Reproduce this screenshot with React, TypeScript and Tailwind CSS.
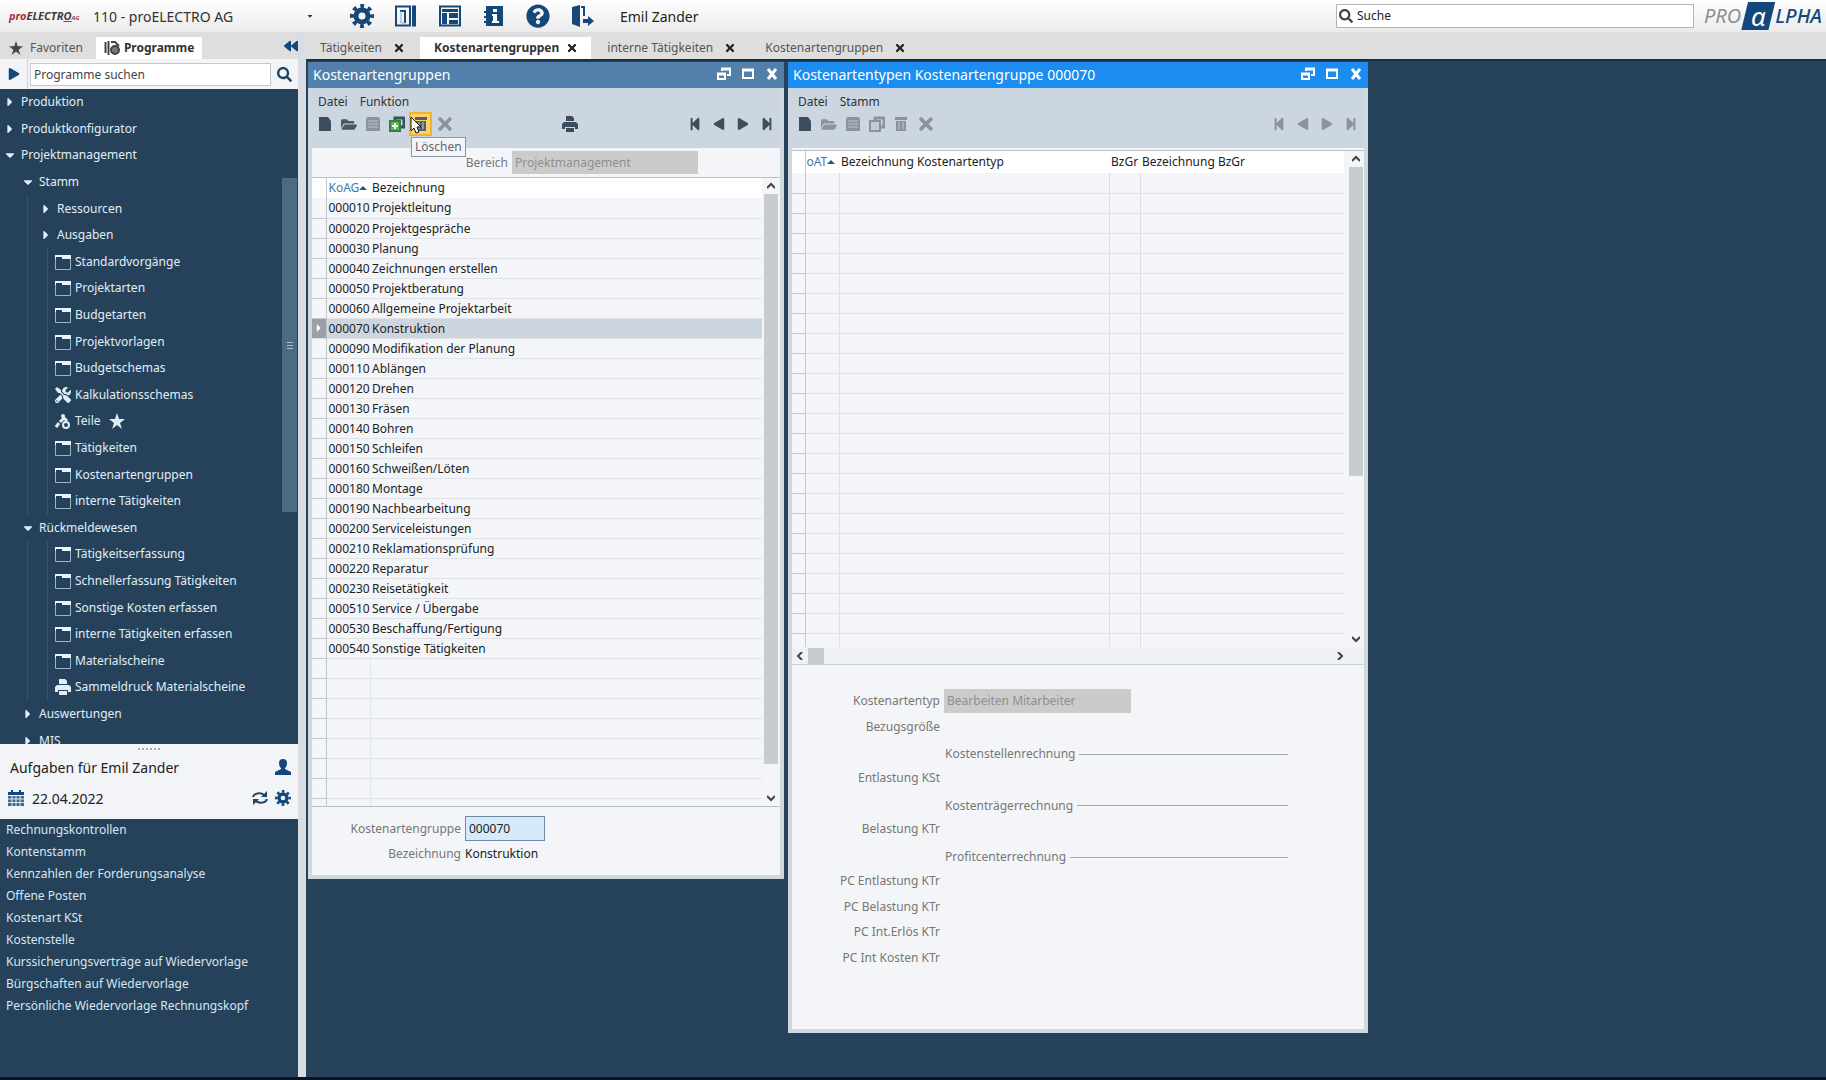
import React from "react";
import {
  FaBackward,
  FaCaretDown,
  FaCaretRight,
  FaFolderOpen,
  FaPlay,
  FaQuestionCircle,
  FaSearch,
  FaStepBackward,
  FaStepForward,
  FaTimes,
  FaTools,
} from "react-icons/fa";

interface TreeEntry {
  label: string;
  level: number;
  kind: "open" | "closed" | "form" | "tools" | "part" | "print";
  starred?: boolean;
}

const tree: TreeEntry[] = [
  { label: "Produktion", level: 0, kind: "closed" },
  { label: "Produktkonfigurator", level: 0, kind: "closed" },
  { label: "Projektmanagement", level: 0, kind: "open" },
  { label: "Stamm", level: 1, kind: "open" },
  { label: "Ressourcen", level: 2, kind: "closed" },
  { label: "Ausgaben", level: 2, kind: "closed" },
  { label: "Standardvorgänge", level: 2, kind: "form" },
  { label: "Projektarten", level: 2, kind: "form" },
  { label: "Budgetarten", level: 2, kind: "form" },
  { label: "Projektvorlagen", level: 2, kind: "form" },
  { label: "Budgetschemas", level: 2, kind: "form" },
  { label: "Kalkulationsschemas", level: 2, kind: "tools" },
  { label: "Teile", level: 2, kind: "part", starred: true },
  { label: "Tätigkeiten", level: 2, kind: "form" },
  { label: "Kostenartengruppen", level: 2, kind: "form" },
  { label: "interne Tätigkeiten", level: 2, kind: "form" },
  { label: "Rückmeldewesen", level: 1, kind: "open" },
  { label: "Tätigkeitserfassung", level: 2, kind: "form" },
  { label: "Schnellerfassung Tätigkeiten", level: 2, kind: "form" },
  { label: "Sonstige Kosten erfassen", level: 2, kind: "form" },
  { label: "interne Tätigkeiten erfassen", level: 2, kind: "form" },
  { label: "Materialscheine", level: 2, kind: "form" },
  { label: "Sammeldruck Materialscheine", level: 2, kind: "print" },
  { label: "Auswertungen", level: 1, kind: "closed" },
  { label: "MIS", level: 1, kind: "closed" },
];

const tasks = [
  "Rechnungskontrollen",
  "Kontenstamm",
  "Kennzahlen der Forderungsanalyse",
  "Offene Posten",
  "Kostenart KSt",
  "Kostenstelle",
  "Kurssicherungsverträge auf Wiedervorlage",
  "Bürgschaften auf Wiedervorlage",
  "Persönliche Wiedervorlage Rechnungskopf",
];

const groups = [
  { id: "000010", name: "Projektleitung" },
  { id: "000020", name: "Projektgespräche" },
  { id: "000030", name: "Planung" },
  { id: "000040", name: "Zeichnungen erstellen" },
  { id: "000050", name: "Projektberatung" },
  { id: "000060", name: "Allgemeine Projektarbeit" },
  { id: "000070", name: "Konstruktion" },
  { id: "000090", name: "Modifikation der Planung" },
  { id: "000110", name: "Ablängen" },
  { id: "000120", name: "Drehen" },
  { id: "000130", name: "Fräsen" },
  { id: "000140", name: "Bohren" },
  { id: "000150", name: "Schleifen" },
  { id: "000160", name: "Schweißen/Löten" },
  { id: "000180", name: "Montage" },
  { id: "000190", name: "Nachbearbeitung" },
  { id: "000200", name: "Serviceleistungen" },
  { id: "000210", name: "Reklamationsprüfung" },
  { id: "000220", name: "Reparatur" },
  { id: "000230", name: "Reisetätigkeit" },
  { id: "000510", name: "Service / Übergabe" },
  { id: "000530", name: "Beschaffung/Fertigung" },
  { id: "000540", name: "Sonstige Tätigkeiten" },
];

const selectedGroup = "000070";

const costFields = [
  { label: "Bezugsgröße" },
  { section: "Kostenstellenrechnung" },
  { label: "Entlastung KSt" },
  { section: "Kostenträgerrechnung" },
  { label: "Belastung KTr" },
  { section: "Profitcenterrechnung" },
  { label: "PC Entlastung KTr" },
  { label: "PC Belastung KTr" },
  { label: "PC Int.Erlös KTr" },
  { label: "PC Int Kosten KTr" },
];

/* ---------- Icons ---------- */

const GearIcon = ({ className }: { className: string }) => (
  <svg viewBox="0 0 24 24" className={className} fill="none" stroke="#15487a">
    <circle cx="12" cy="12" r="6" strokeWidth="5" />
    <circle cx="12" cy="12" r="10" strokeWidth="4" strokeDasharray="3.850 4" strokeDashoffset="2" />
  </svg>
);

const StarIcon = ({ className }: { className: string }) => (
  <svg viewBox="0 0 16 16" className={className} fill="currentColor">
    <path d="M8 0l2 6h6l-5 4 2 6-5-4-5 4 2-6-5-4h6z" />
  </svg>
);

const FormIcon = () => (
  <svg viewBox="0 0 16 16" className="h-4 w-4" fill="none">
    <path d="M.5 2.5h15v13H.5z" stroke="#9db4c6" />
    <path d="M0 1h16v4H0z" fill="#e8f3fb" />
    <path d="M1 4h6" stroke="#25425a" strokeWidth="2" />
  </svg>
);

const PrinterIcon = ({ className }: { className?: string }) => (
  <svg viewBox="0 0 16 16" className={`h-4 w-4 ${className ?? ""}`} fill="currentColor">
    <path d="M4 0h6l2 2v3H4z" />
    <path d="M2 6h12l2 2v5h-3v-2H3v2H0V8z" />
    <path d="M4 12h8v4H4z" />
  </svg>
);

const PartIcon = () => (
  <svg viewBox="0 0 16 16" className="h-4 w-4" fill="none" stroke="#e2eef7">
    <path d="M1 14l3-4M5 9l4-4 3 3" strokeWidth="3" />
    <circle cx="8" cy="3" r="2" fill="#e2eef7" stroke="none" />
    <circle cx="11" cy="12" r="3" strokeWidth="2" />
  </svg>
);

const UserIcon = () => (
  <svg viewBox="0 0 16 16" className="h-4 w-4" fill="#15487a">
    <path d="M8 0c3 0 4 2 4 4 0 3-1 4-2 5v1l6 3v3H0v-3l6-3V9C5 8 4 7 4 4c0-2 1-4 4-4z" />
  </svg>
);

const PanelIcon = () => (
  <svg viewBox="0 0 24 24" className="h-6 w-6" fill="none">
    <path d="M2 2.5h14v19H2z" stroke="#15487a" strokeWidth="2" />
    <path d="M18 1.5h4v21h-4z" fill="#15487a" />
    <path d="M6 7h5v12" stroke="#15487a" strokeWidth="2" />
    <path d="M7 7v12h4" stroke="#8fa9c2" />
  </svg>
);

const LayoutIcon = () => (
  <svg viewBox="0 0 24 24" className="h-6 w-6" fill="none">
    <path d="M2 2.5h20v19H2z" stroke="#15487a" strokeWidth="2" />
    <path d="M4 5h16v3H4zM4 9h5v11H4zM11 9h9v5h-9zM11 16h9v4h-9z" fill="#15487a" />
  </svg>
);

const InfoIcon = () => (
  <svg viewBox="0 0 24 24" className="h-6 w-6">
    <path d="M4 2h17v20H4v-3H2v-2h2v-3H2v-2h2V9H2V7h2z" fill="#15487a" />
    <path d="M11 5h4v3h-4zM10 10h5v7h2v2h-7v-2h1v-5h-1z" fill="#fff" />
  </svg>
);

const ExitIcon = () => (
  <svg viewBox="0 0 24 24" className="h-6 w-6" fill="#15487a">
    <path d="M2 3l8-2v22l-8-3zM11 2h4v10h-2V4h-2z" />
    <path d="M13 15h5v-3l6 5-6 5v-3h-5z" />
  </svg>
);

const TabProgramIcon = () => (
  <svg viewBox="0 0 16 16" className="h-4 w-4" fill="none" stroke="#444">
    <path d="M1.500 2v11M4.500 1v14" strokeWidth="2" />
    <path d="M7 2h4l4 4" strokeWidth="2" />
    <circle cx="11" cy="10" r="4" fill="#777" strokeWidth="2" />
  </svg>
);

const NewIcon = () => (
  <svg viewBox="0 0 16 16" className="h-4 w-4" fill="#3c4d5e">
    <path d="M2 1h9l3 4v10H2z" />
  </svg>
);

const SaveIcon = () => (
  <svg viewBox="0 0 16 16" className="h-4 w-4">
    <path d="M2 1h12l1 2v12H1V3z" fill="#8b949d" />
    <path d="M3 5h10M3 8h10M3 11h10" stroke="#b9c3cc" />
  </svg>
);

const TrashIcon = () => (
  <svg viewBox="0 0 16 16" className="h-4 w-4" fill="currentColor">
    <path d="M2 1h12v3H2zM3 5h10v10H3z" />
    <path d="M6 6v7M10 6v7" stroke="#c3ccd4" />
  </svg>
);

const CopyIcon = ({ green }: { green?: boolean }) => (
  <svg viewBox="0 0 16 16" className="h-4 w-4" fill="none">
    <path d="M6 4V2h9v9h-3" stroke={green ? "#35505f" : "#8b949d"} strokeWidth="3" />
    <path
      d="M1 5h10v10H1z"
      fill={green ? "#5cb653" : "#c3ccd4"}
      stroke={green ? "#3d7a4b" : "#8b949d"}
      strokeWidth="2"
    />
    {green && <path d="M6 7v6M3 10h6" stroke="#e5ffe0" strokeWidth="2" />}
  </svg>
);

const CalendarIcon = () => (
  <svg viewBox="0 0 16 16" className="h-4 w-4">
    <path d="M0 2h3V0h2v2h6V0h2v2h3v3H0z" fill="#15487a" />
    <path d="M0 6h16v10H0z" fill="#3b6a94" />
    <path d="M0 9h16M0 12.500h16M4 6v10M8 6v10M12 6v10" stroke="#dbe7f1" />
  </svg>
);

const RefreshIcon = () => (
  <svg viewBox="0 0 16 16" className="h-4 w-4" fill="none" stroke="#1c4468" strokeWidth="2">
    <path d="M1 7c1-4 8-5 11-2M15 9c-1 4-8 5-11 2" />
    <path d="M15 1v6H9zM1 15V9h6z" fill="#1c4468" stroke="none" />
  </svg>
);

const RestoreIcon = () => (
  <svg viewBox="0 0 16 16" className="h-4 w-4" fill="none" stroke="#fff" strokeWidth="2">
    <path d="M2 8h7v5H2zM6 5V3h8v6h-3" />
    <path d="M1 8h9M5 3h10" strokeWidth="3" />
  </svg>
);

const MaximizeIcon = () => (
  <svg viewBox="0 0 16 16" className="h-4 w-4" fill="none" stroke="#fff" strokeWidth="2">
    <path d="M3 4h10v8H3z" />
    <path d="M2 4h12" strokeWidth="3" />
  </svg>
);

const CloseIcon = () => (
  <svg viewBox="0 0 16 16" className="h-4 w-4" fill="none" stroke="#fff" strokeWidth="3">
    <path d="M4 3l8 10M12 3L4 13" />
  </svg>
);

const Chevron = ({ d }: { d: string }) => (
  <svg viewBox="0 0 8 8" className="h-2 w-2" fill="none" stroke="#444" strokeWidth="2">
    <path d={d} />
  </svg>
);

const SortIcon = () => (
  <svg viewBox="0 0 8 8" className="h-2 w-2" fill="#24577f">
    <path d="M0 6l4-4 4 4z" />
  </svg>
);

/* ---------- Header ---------- */

const Header = () => (
  <header className="flex h-8 shrink-0 items-center bg-linear-to-b from-white to-[#ebebeb] text-[#333]">
    <span className="ml-[9px] w-[84px] shrink-0 text-[11px] font-bold italic text-[#3c3c3c]">
      <span className="text-[#b02a37]">pro</span>ELECTR
      <span className="underline decoration-[#b02a37]">O</span>
      <span className="text-[6px] text-[#b02a37]">AG</span>
    </span>
    <select
      aria-label="Mandant"
      className="w-[205px] appearance-none bg-transparent text-[14px] outline-none"
    >
      <option>110 - proELECTRO AG</option>
    </select>
    <FaCaretDown className="ml-2 h-2 w-2" />
    <nav className="ml-9 flex items-center gap-5 text-[#15487a]">
      <button aria-label="Einstellungen">
        <GearIcon className="h-6 w-6" />
      </button>
      <button aria-label="Seitenleiste">
        <PanelIcon />
      </button>
      <button aria-label="Layout">
        <LayoutIcon />
      </button>
      <button aria-label="Info">
        <InfoIcon />
      </button>
      <button aria-label="Hilfe">
        <FaQuestionCircle className="h-6 w-6" />
      </button>
      <button aria-label="Abmelden">
        <ExitIcon />
      </button>
    </nav>
    <span className="ml-[26px] text-[14px] text-[#222]">Emil Zander</span>
    <label className="ml-auto flex h-6 w-[358px] items-center gap-1 border border-[#b5b5b5] bg-white px-[2px]">
      <FaSearch className="h-[14px] w-[14px] text-[#444]" />
      <input
        aria-label="Suche"
        placeholder="Suche"
        className="min-w-0 flex-1 text-[12px] outline-none placeholder:text-[#222]"
      />
    </label>
    <span className="mr-1 ml-[10px] flex items-center text-[20px] leading-6 italic">
      <span className="text-[#8a8f94]">PRO</span>
      <span className="w-[34px] bg-[#15487a] text-center text-[26px] leading-[28px] text-white [clip-path:polygon(20%_0,100%_0,80%_100%,0_100%)]">
        α
      </span>
      <span className="font-medium text-[#15487a]">LPHA</span>
    </span>
  </header>
);

interface DocTabProps {
  label: string;
  active?: boolean;
}

const DocTab: React.FC<DocTabProps> = ({ label, active }) => (
  <div
    className={
      active
        ? "flex h-[22px] items-center gap-2 bg-white px-[14px] font-bold text-[#333]"
        : "flex h-[22px] items-center gap-3 px-[14px] text-[#555]"
    }
  >
    <button>{label}</button>
    <button aria-label={`${label} schließen`}>
      <FaTimes className="h-3 w-[10px] text-[#222]" />
    </button>
  </div>
);

/* ---------- Sidebar ---------- */

const TreeRow = ({ entry }: { entry: TreeEntry }) => {
  const folder = entry.kind === "open" || entry.kind === "closed";
  return (
    <li className="flex">
      {entry.level > 0 && (
        <span className={entry.level > 1 ? "w-[28px] border-r border-[#365570]" : "w-[18px]"} />
      )}
      {entry.level === 2 && (
        <span className={folder ? "w-[8px]" : "w-[20px] border-r border-[#365570]"} />
      )}
      <button className="flex items-center text-left">
        {folder ? (
          <span className="mr-[1px] ml-1 flex w-4 justify-start">
            {entry.kind === "open" ? (
              <FaCaretDown className="h-[14px] w-3" />
            ) : (
              <FaCaretRight className="h-[14px] w-3" />
            )}
          </span>
        ) : (
          <span className="mr-1 ml-[7px]">
            {entry.kind === "form" && <FormIcon />}
            {entry.kind === "tools" && <FaTools className="h-4 w-4" />}
            {entry.kind === "part" && <PartIcon />}
            {entry.kind === "print" && <PrinterIcon />}
          </span>
        )}
        {entry.label}
        {entry.starred && <StarIcon className="ml-2 h-4 w-4" />}
      </button>
    </li>
  );
};

const Sidebar = () => (
  <aside className="flex w-[306px] shrink-0 flex-col border-r-8 border-[#d9dde3] bg-[#25425a]">
    <div className="flex h-[27px] shrink-0 items-end bg-[#dedede] text-[12px]">
      <button className="flex h-[22px] items-center gap-[7px] pl-[9px] text-[#555]">
        <StarIcon className="h-[14px] w-[14px] text-[#444]" />
        Favoriten
      </button>
      <button className="ml-[13px] flex h-[22px] items-center gap-1 bg-white px-2 font-bold text-[#333]">
        <TabProgramIcon />
        Programme
      </button>
      <button aria-label="Einklappen" className="ml-auto self-center">
        <FaBackward className="h-[14px] w-[14px] text-[#15487a]" />
      </button>
    </div>
    <div className="flex h-[30px] shrink-0 items-center bg-[#f2f4f7]">
      <button
        aria-label="Starten"
        className="flex h-full w-[28px] items-center justify-center border-r border-[#ccd3da] text-[#15487a]"
      >
        <FaPlay className="h-3 w-3" />
      </button>
      <input
        aria-label="Programme suchen"
        placeholder="Programme suchen"
        className="ml-[2px] h-[23px] min-w-0 flex-1 border border-[#c5c9ce] bg-white px-[3px] text-[12px] outline-none placeholder:text-[#444]"
      />
      <button aria-label="Suchen" className="px-[6px] text-[#1c4468]">
        <FaSearch className="h-[15px] w-[15px]" />
      </button>
    </div>
    <div className="flex h-[655px] shrink-0 overflow-hidden text-[12px] leading-4 text-[#e2eef7]">
      <ul className="grid h-[665px] flex-1 auto-rows-fr">
        {tree.map((entry) => (
          <TreeRow key={entry.label} entry={entry} />
        ))}
      </ul>
      <div className="w-4 pt-[89px]">
        <div className="flex h-[334px] w-[15px] flex-col items-center justify-center gap-[2px] bg-[#4d6a84]">
          <span className="h-px w-[6px] bg-[#a9bccc]" />
          <span className="h-px w-[6px] bg-[#a9bccc]" />
          <span className="h-px w-[6px] bg-[#a9bccc]" />
        </div>
      </div>
    </div>
    <section className="h-[75px] shrink-0 bg-[#f2f4f7] text-[14px] text-[#222]">
      <div className="mx-auto h-[6px] w-[22px] border-b-2 border-dotted border-[#a4abb3]" />
      <div className="flex h-[34px] items-center justify-between pr-[7px] pl-[10px]">
        <h2>Aufgaben für Emil Zander</h2>
        <UserIcon />
      </div>
      <div className="flex h-[28px] items-center pr-[7px] pl-2">
        <CalendarIcon />
        <span className="ml-2">22.04.2022</span>
        <button aria-label="Aktualisieren" className="ml-auto">
          <RefreshIcon />
        </button>
        <button aria-label="Aufgaben einstellen" className="ml-[7px]">
          <GearIcon className="h-4 w-4" />
        </button>
      </div>
    </section>
    <ul className="flex-1 overflow-hidden pl-[6px] text-[12px] leading-[22px] text-[#d8e6f1]">
      {tasks.map((task) => (
        <li key={task}>
          <a href="#">{task}</a>
        </li>
      ))}
    </ul>
  </aside>
);

/* ---------- Windows ---------- */

interface WindowProps {
  title: string;
  menu: string[];
  active?: boolean;
  className: string;
  children: React.ReactNode;
}

const NavButtons = ({ muted }: { muted?: boolean }) => (
  <div className={muted ? "ml-auto flex gap-[10px] text-[#8b949d]" : "ml-auto flex gap-[10px] text-[#3c4d5e]"}>
    <button aria-label="Erster">
      <FaStepBackward className="h-[14px] w-[14px]" />
    </button>
    <button aria-label="Vorheriger">
      <FaPlay className="h-3 w-[14px] rotate-180" />
    </button>
    <button aria-label="Nächster">
      <FaPlay className="h-3 w-[14px]" />
    </button>
    <button aria-label="Letzter">
      <FaStepForward className="h-[14px] w-[14px]" />
    </button>
  </div>
);

const Toolbar = ({ active }: { active?: boolean }) => (
  <div className="flex h-6 items-center pr-[6px] pl-[5px]">
    <div className="flex items-center gap-2 text-[#8b949d]">
      <button aria-label="Neu">
        <NewIcon />
      </button>
      <button aria-label="Öffnen" className={active ? "" : "text-[#4a5866]"}>
        <FaFolderOpen className="h-[15px] w-4" />
      </button>
      <button aria-label="Speichern">
        <SaveIcon />
      </button>
      <button aria-label="Kopieren">
        <CopyIcon green={!active} />
      </button>
      {active ? (
        <button aria-label="Löschen">
          <TrashIcon />
        </button>
      ) : (
        <div className="relative -mx-[4px]">
          <button
            aria-label="Löschen"
            className="flex h-6 w-[23px] items-center justify-center border-2 border-[#f2b22c] bg-[#fbd36c] text-[#54606c]"
          >
            <TrashIcon />
          </button>
          <svg viewBox="0 0 12 18" className="absolute top-1 left-[1px] z-10 h-[18px] w-3">
            <path d="M1 1v14l3-3 2 5 3-1-2-5h4z" fill="#fff" stroke="#111" />
          </svg>
          <span
            role="tooltip"
            className="absolute top-[25px] left-[2px] z-10 border border-[#8c96a8] bg-[#f3f4f8] px-[3px] text-[12px] leading-[18px] text-[#666]"
          >
            Löschen
          </span>
        </div>
      )}
      <button aria-label="Abbrechen">
        <FaTimes className="h-5 w-[18px]" />
      </button>
    </div>
    {!active && (
      <button aria-label="Drucken" className="ml-[108px] text-[#3c4d5e]">
        <PrinterIcon />
      </button>
    )}
    <NavButtons muted={active} />
  </div>
);

const AppWindow: React.FC<WindowProps> = ({ title, menu, active, className, children }) => (
  <section className={`flex flex-col border-4 border-t-0 border-[#cfd7df] bg-[#f3f5f8] ${className}`}>
    <div
      className={
        active
          ? "-mx-1 flex h-[26px] items-center bg-[#1b8df0] pr-1 pb-[2px] pl-[5px] text-white"
          : "-mx-1 flex h-[26px] items-center bg-[#5280ab] pr-1 pb-[2px] pl-[5px] text-white"
      }
    >
      <h2 className="flex-1 text-[14px]">{title}</h2>
      <div className="flex items-center gap-2">
        <button aria-label="Wiederherstellen">
          <RestoreIcon />
        </button>
        <button aria-label="Maximieren">
          <MaximizeIcon />
        </button>
        <button aria-label="Schließen">
          <CloseIcon />
        </button>
      </div>
    </div>
    <div className="h-[60px] bg-[#cbd6e0] pt-1">
      <div className="flex gap-3 pl-[6px] text-[12px] leading-5 text-[#333]">
        {menu.map((item) => (
          <button key={item}>{item}</button>
        ))}
      </div>
      <Toolbar active={active} />
    </div>
    {children}
  </section>
);

const GroupsWindow = () => (
  <AppWindow title="Kostenartengruppen" menu={["Datei", "Funktion"]} className="w-[476px]">
    <div className="flex h-[29px] items-center text-[12px] text-[#777]">
      <label htmlFor="bereich" className="w-[200px] pr-1 text-right">
        Bereich
      </label>
      <select
        id="bereich"
        disabled
        className="h-[23px] w-[186px] appearance-none bg-[#cbcbcb] pl-[3px] text-[#8f8f8f] opacity-100"
      >
        <option>Projektmanagement</option>
      </select>
    </div>
    <div className="flex border-y border-[#b9c0c8]">
      <div className="h-[628px] flex-1 overflow-hidden">
        <table className="w-full table-fixed border-collapse text-[12px] text-[#222]">
          <colgroup>
            <col className="w-[14px]" />
            <col className="w-[44px]" />
            <col />
          </colgroup>
          <thead>
            <tr className="h-5 bg-white">
              <th className="border-r border-[#c2c8ce]" />
              <th className="p-0 pl-[2px] text-left font-normal whitespace-nowrap text-[#3e78a8]">
                <span className="flex items-center">
                  KoAG
                  <SortIcon />
                </span>
              </th>
              <th className="p-0 pl-[2px] text-left font-normal">Bezeichnung</th>
            </tr>
          </thead>
          <tbody>
            {groups.map((group) => (
              <tr
                key={group.id}
                className={
                  group.id === selectedGroup
                    ? "h-5 border-b border-[#dfe2e6] bg-[#cdd6df]"
                    : "h-5 border-b border-[#dfe2e6]"
                }
              >
                <td
                  className={
                    group.id === selectedGroup
                      ? "border-r border-[#c2c8ce] bg-[#9aa0a6] p-0"
                      : "border-r border-b border-[#c2c8ce] p-0"
                  }
                >
                  {group.id === selectedGroup && (
                    <FaCaretRight className="mx-auto h-3 w-3 text-white" />
                  )}
                </td>
                <td className="p-0 pl-[2px] leading-[19px]">{group.id}</td>
                <td className="p-0 pl-[2px] leading-[19px]">{group.name}</td>
              </tr>
            ))}
            {Array.from({ length: 8 }).map((_, index) => (
              <tr key={index} className="h-5 border-b border-[#dfe2e6]">
                <td className="border-r border-b border-[#c2c8ce] p-0" />
                <td className="border-r border-[#e4e7ea] p-0" />
                <td className="p-0" />
              </tr>
            ))}
          </tbody>
        </table>
      </div>
      <div className="flex w-[18px] flex-col items-center justify-between py-1">
        <Chevron d="M0 6l4-4 4 4" />
        <div className="mt-1 mb-[30px] w-[14px] flex-1 bg-[#c9cccf]" />
        <Chevron d="M0 2l4 4 4-4" />
      </div>
    </div>
    <div className="grid grid-cols-[149px_1fr] items-center gap-x-1 pt-[9px] pb-2 text-[12px] text-[#777]">
      <label htmlFor="gruppe" className="text-right">
        Kostenartengruppe
      </label>
      <input
        id="gruppe"
        defaultValue={selectedGroup}
        className="h-[25px] w-[80px] border border-[#6f8ba5] bg-[#d6eafa] px-[3px] text-[#222] outline-none"
      />
      <span className="text-right leading-[26px]">Bezeichnung</span>
      <span className="text-[#222]">Konstruktion</span>
    </div>
  </AppWindow>
);

const TypesWindow = () => (
  <AppWindow
    title="Kostenartentypen Kostenartengruppe 000070"
    menu={["Datei", "Stamm"]}
    active
    className="w-[580px]"
  >
    <div className="mt-[2px] flex border-t border-[#b9c0c8]">
      <div className="h-[496px] flex-1 overflow-hidden">
        <table className="w-full table-fixed border-collapse text-[12px] text-[#222]">
          <colgroup>
            <col className="w-[13px]" />
            <col className="w-[34px]" />
            <col className="w-[270px]" />
            <col className="w-[31px]" />
            <col />
          </colgroup>
          <thead>
            <tr className="h-[22px] bg-white">
              <th className="border-r border-[#c2c8ce]" />
              <th className="p-0 font-normal text-[#3e78a8]">
                <span className="flex items-center pl-[1px]">
                  oAT
                  <SortIcon />
                </span>
              </th>
              <th className="p-0 pl-[2px] text-left font-normal">Bezeichnung Kostenartentyp</th>
              <th className="p-0 pl-[2px] text-left font-normal">BzGr</th>
              <th className="p-0 pl-[2px] text-left font-normal">Bezeichnung BzGr</th>
            </tr>
          </thead>
          <tbody>
            {Array.from({ length: 24 }).map((_, index) => (
              <tr key={index} className="h-5 border-b border-[#dfe2e6]">
                <td className="border-r border-b border-[#c2c8ce] p-0" />
                <td className="border-r border-[#dcdfe3] p-0" />
                <td className="border-r border-[#dcdfe3] p-0" />
                <td className="border-r border-[#dcdfe3] p-0" />
                <td className="p-0" />
              </tr>
            ))}
          </tbody>
        </table>
      </div>
      <div className="flex w-[20px] flex-col items-center justify-between py-1 pl-1">
        <Chevron d="M0 6l4-4 4 4" />
        <div className="mt-1 mb-auto h-[309px] w-[14px] bg-[#c9cccf]" />
        <Chevron d="M0 2l4 4 4-4" />
      </div>
    </div>
    <div className="flex h-[18px] items-center border-b border-[#cdd2d7] bg-[#f0f1f3] pr-5 pl-1">
      <Chevron d="M6 0L2 4l4 4" />
      <div className="mr-auto ml-1 h-4 w-4 bg-[#c9cccf]" />
      <Chevron d="M2 0l4 4-4 4" />
    </div>
    <div className="mt-[23px] mb-[58px] grid h-[283px] auto-rows-fr pr-[76px] text-[12px] text-[#777]">
      <div className="flex items-center">
        <label htmlFor="typ" className="w-[152px] pr-1 text-right">
          Kostenartentyp
        </label>
        <select
          id="typ"
          disabled
          className="h-6 w-[187px] appearance-none bg-[#cbcbcb] pl-[3px] text-[#8f8f8f] opacity-100"
        >
          <option>Bearbeiten Mitarbeiter</option>
        </select>
      </div>
      {costFields.map((field, index) =>
        field.section ? (
          <div key={index} className="flex items-center gap-1 pt-1 pl-[153px]">
            <h3>{field.section}</h3>
            <hr className="flex-1 border-[#a6abb0]" />
          </div>
        ) : (
          <div key={index} className="flex items-center">
            <span className="w-[152px] pr-1 text-right">{field.label}</span>
          </div>
        )
      )}
    </div>
  </AppWindow>
);

const App = () => (
  <div className="flex h-screen flex-col overflow-hidden bg-[#25425a] font-['Noto_Sans',sans-serif]">
    <Header />
    <div className="flex min-h-0 flex-1">
      <Sidebar />
      <div className="flex flex-1 flex-col">
        <nav className="flex h-[27px] shrink-0 items-end gap-[2px] bg-[#dedede] text-[12px]">
          <DocTab label="Tätigkeiten" />
          <DocTab label="Kostenartengruppen" active />
          <DocTab label="interne Tätigkeiten" />
          <DocTab label="Kostenartengruppen" />
        </nav>
        <main className="flex flex-1 items-start gap-1 border-t-2 border-[#1a3145] pt-[1px] pl-[2px]">
          <GroupsWindow />
          <TypesWindow />
        </main>
      </div>
    </div>
    <footer className="h-[3px] shrink-0 bg-[#08131f]" />
  </div>
);

export default App;
